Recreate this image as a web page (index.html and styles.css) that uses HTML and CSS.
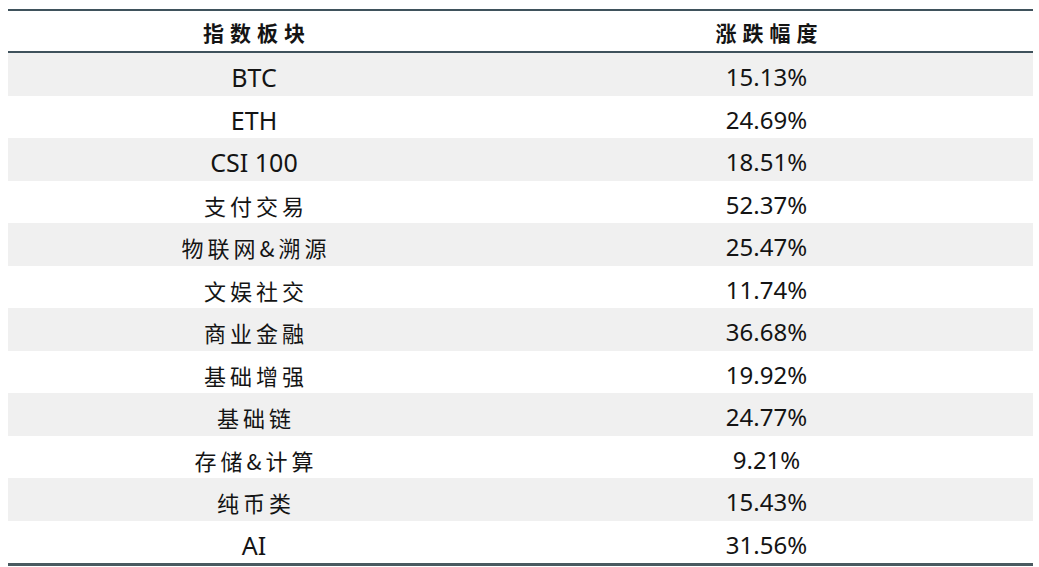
FILE: index.html
```html
<!DOCTYPE html>
<html lang="zh-CN">
<head>
<meta charset="utf-8">
<title>指数板块涨跌幅度</title>
<link rel="stylesheet" href="styles.css">
</head>
<body>
<div class="sheet">
  <div class="table">
    <div class="row head">
      <div class="cell left cn-b">指数板块</div>
      <div class="cell right cn-b">涨跌幅度</div>
    </div>
    <div class="row odd"><div class="cell left">BTC</div><div class="cell right">15.13%</div></div>
    <div class="row"><div class="cell left">ETH</div><div class="cell right">24.69%</div></div>
    <div class="row odd"><div class="cell left">CSI 100</div><div class="cell right">18.51%</div></div>
    <div class="row"><div class="cell left cn">支付交易</div><div class="cell right">52.37%</div></div>
    <div class="row odd"><div class="cell left cn">物联网&amp;溯源</div><div class="cell right">25.47%</div></div>
    <div class="row"><div class="cell left cn">文娱社交</div><div class="cell right">11.74%</div></div>
    <div class="row odd"><div class="cell left cn">商业金融</div><div class="cell right">36.68%</div></div>
    <div class="row"><div class="cell left cn">基础增强</div><div class="cell right">19.92%</div></div>
    <div class="row odd"><div class="cell left cn">基础链</div><div class="cell right">24.77%</div></div>
    <div class="row"><div class="cell left cn">存储&amp;计算</div><div class="cell right">9.21%</div></div>
    <div class="row odd"><div class="cell left cn">纯币类</div><div class="cell right">15.43%</div></div>
    <div class="row last"><div class="cell left">AI</div><div class="cell right">31.56%</div></div>
  </div>
</div>
</body>
</html>
```
FILE: styles.css
```css
html, body {
  margin: 0;
  padding: 0;
  background: #ffffff;
}

.sheet {
  padding: 9px 6px 0 8px;
  font-family: "Noto Sans", "Noto Sans CJK SC", sans-serif;
  color: #141414;
}

.table {
  width: 1025px;
  border-top: 2px solid #3f525c;
  border-bottom: 3px solid #4a5a60;
}

.row {
  display: grid;
  grid-template-columns: 492px 533px;
  height: 42.5px;
}

.row.odd {
  background: #f0f0f0;
}

.row.head {
  height: 40px;
  border-bottom: 2px solid #3f525c;
}

.cell {
  text-align: center;
  white-space: nowrap;
  padding-top: 7px;
  line-height: 34px;
}

.cell.left {
  font-size: 25px;
}

.cell.right {
  font-size: 24px;
}

.cell.cn {
  font-family: "Noto Sans CJK SC", sans-serif;
  font-size: 22px;
  letter-spacing: 4px;
  text-indent: 4px;
}

.cell.cn-b {
  font-family: "Noto Sans CJK SC", sans-serif;
  font-size: 21px;
  font-weight: 700;
  letter-spacing: 6px;
  text-indent: 6px;
  padding-top: 4px;
}
```
